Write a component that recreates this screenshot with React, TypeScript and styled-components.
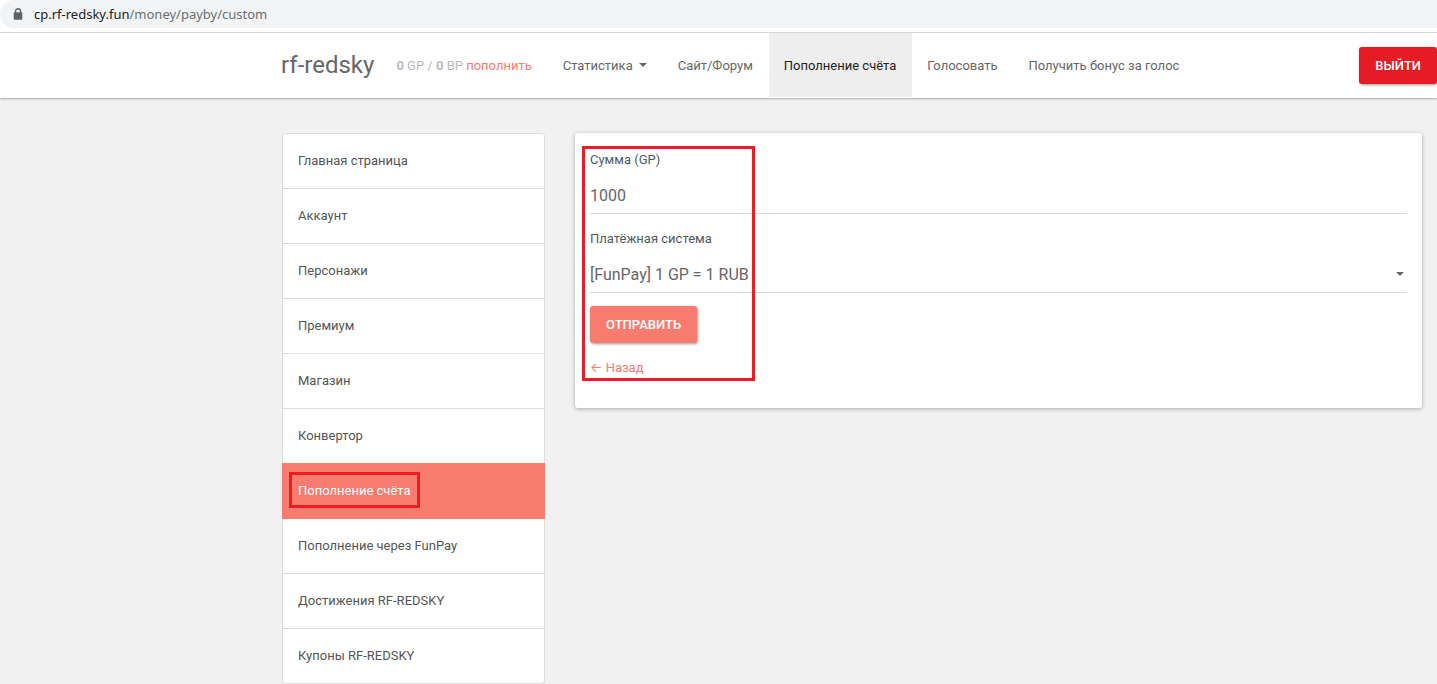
import React from "react";
import styled, { createGlobalStyle } from "styled-components";

const GlobalStyle = createGlobalStyle`
  *, *::before, *::after { box-sizing: border-box; }
  body {
    margin: 0;
    background: #f1f1f1;
    color: #666;
    font-family: Roboto, "Liberation Sans", sans-serif;
    font-size: 13px;
    line-height: 23px;
  }
  a { text-decoration: none; }
`;

const accent = "#f87b70";
const mark = "#ea1c24";

const BrowserBar = styled.div`
  background: #fff;
  padding-bottom: 4px;
  border-bottom: 1px solid #dcdcdc;
`;

const AddressPill = styled.div`
  display: flex;
  align-items: center;
  gap: 11px;
  height: 28px;
  padding-left: 13px;
  background: #f1f3f4;
  border-radius: 14px 0 0 14px;
  font-family: "Noto Sans", "Open Sans", sans-serif;
  font-size: 13px;
  color: #6b6f73;

  svg { display: block; }
  b { font-weight: 400; color: #202124; }
`;

const Navbar = styled.header`
  display: flex;
  align-items: center;
  height: 65px;
  padding-left: 281px;
  background: #fff;
  box-shadow: 0 1px 2px rgba(0, 0, 0, 0.3);
`;

const Brand = styled.a`
  font-size: 24px;
  color: #666;
`;

const Balance = styled.p`
  margin: 0 16px 0 22px;
  color: #bbb;
  white-space: nowrap;

  a { color: ${accent}; }
`;

const Nav = styled.nav`
  display: flex;
  align-self: stretch;
  padding-bottom: 1px;
`;

const NavLink = styled.a<{ $active?: boolean }>`
  display: flex;
  align-items: center;
  gap: 6px;
  padding: 0 16px 0 15px;
  white-space: nowrap;
  color: ${(p) => (p.$active ? "#212121" : "#666")};
  background: ${(p) => (p.$active ? "#eee" : "transparent")};
`;

const Button = styled.button<{ $color: string }>`
  height: 37px;
  padding: 0 16px;
  border: 0;
  border-radius: 3px;
  background: ${(p) => p.$color};
  color: #fff;
  font: 500 13px/23px Roboto, "Liberation Sans", sans-serif;
  text-transform: uppercase;
  box-shadow: 1px 1px 3px rgba(0, 0, 0, 0.4);
`;

const NavEnd = styled.div`
  margin-left: auto;
`;

const Page = styled.div`
  display: grid;
  grid-template-columns: 263px minmax(0, 1fr);
  gap: 30px;
  align-items: start;
  padding: 35px 15px 0 282px;
`;

const MenuList = styled.ul`
  margin: 0;
  padding: 0;
  list-style: none;
  background: #fff;
  border: 1px solid #ddd;
  border-radius: 3px;
`;

const MenuItem = styled.li`
  & + & { border-top: 1px solid #ddd; }
`;

const MenuLink = styled.a<{ $active?: boolean }>`
  display: flex;
  align-items: center;
  height: 54px;
  padding: 0 15px 2px;
  color: #555;
  ${(p) =>
    p.$active &&
    `
    position: relative;
    height: 56px;
    margin: -1px;
    padding: 0 16px 2px;
    background: ${accent};
    color: #fff;
  `}
`;

const Marked = styled.span`
  position: relative;
  display: block;

  &::after {
    content: "";
    position: absolute;
    inset: -7px -10px -6px -9px;
    border: 3px solid ${mark};
    pointer-events: none;
  }
`;

const Card = styled.main`
  position: relative;
  min-height: 275px;
  padding: 15px;
  background: #fff;
  border-radius: 3px;
  box-shadow: 0 1px 4px rgba(0, 0, 0, 0.3);
`;

const FormMark = styled.div`
  position: absolute;
  top: 13px;
  left: 7px;
  width: 173px;
  height: 235px;
  border: 3px solid ${mark};
  pointer-events: none;
`;

const Field = styled.div`
  position: relative;
  display: flex;
  flex-direction: column;
  gap: 6px;
  margin-bottom: 13px;
`;

const Label = styled.label`
  color: #4e5a66;
`;

const controlStyle = `
  width: 100%;
  height: 37px;
  margin: 0;
  padding: 0;
  border: 0;
  border-bottom: 1px solid #d9d9d9;
  border-radius: 0;
  outline: 0;
  background: transparent;
  color: #666;
  font: 400 16px/23px Roboto, "Liberation Sans", sans-serif;
  appearance: none;
`;

const TextInput = styled.input`${controlStyle}`;
const Select = styled.select`${controlStyle}`;

const SelectArrow = styled.span`
  position: absolute;
  right: 3px;
  bottom: 17px;
  display: flex;
  pointer-events: none;
`;

const BackLink = styled.a`
  display: inline-block;
  margin-top: 13px;
  color: ${accent};
`;

const BackArrow = styled.span`
  font-family: Inter, sans-serif;
  line-height: 1;
`;

const Caret = () => (
  <svg width="8" height="4" viewBox="0 0 8 4" aria-hidden="true">
    <path d="M0 0h8L4 4z" fill="#666" />
  </svg>
);

const menu = [
  "Главная страница",
  "Аккаунт",
  "Персонажи",
  "Премиум",
  "Магазин",
  "Конвертор",
  "Пополнение счёта",
  "Пополнение через FunPay",
  "Достижения RF-REDSKY",
  "Купоны RF-REDSKY",
];

export default function App() {
  return (
    <>
      <GlobalStyle />
      <BrowserBar>
        <AddressPill>
          <svg width="10" height="12" viewBox="0 0 10 12" aria-hidden="true">
            <path d="M2.5 5V3.2a2.5 2.5 0 0 1 5 0V5" fill="none" stroke="#5f6368" strokeWidth="1.4" />
            <rect x="0.7" y="4.3" width="8.6" height="7.4" rx="1" fill="#5f6368" />
          </svg>
          <span><b>cp.rf-redsky.fun</b>/money/payby/custom</span>
        </AddressPill>
      </BrowserBar>

      <Navbar>
        <Brand href="#">rf-redsky</Brand>
        <Balance>
          <b>0</b> GP / <b>0</b> BP <a href="#">пополнить</a>
        </Balance>
        <Nav>
          <NavLink href="#">Статистика <Caret /></NavLink>
          <NavLink href="#">Сайт/Форум</NavLink>
          <NavLink href="#" $active>Пополнение счёта</NavLink>
          <NavLink href="#">Голосовать</NavLink>
          <NavLink href="#">Получить бонус за голос</NavLink>
        </Nav>
        <NavEnd>
          <Button type="button" $color="#e51c23">Выйти</Button>
        </NavEnd>
      </Navbar>

      <Page>
        <MenuList>
          {menu.map((name) => {
            const active = name === "Пополнение счёта";
            return (
              <MenuItem key={name}>
                <MenuLink href="#" $active={active}>
                  {active ? <Marked>{name}</Marked> : name}
                </MenuLink>
              </MenuItem>
            );
          })}
        </MenuList>

        <Card>
          <form onSubmit={(e) => e.preventDefault()}>
            <Field>
              <Label htmlFor="sum">Сумма (GP)</Label>
              <TextInput id="sum" type="text" defaultValue="1000" />
            </Field>
            <Field>
              <Label htmlFor="system">Платёжная система</Label>
              <Select id="system">
                <option>[FunPay] 1 GP = 1 RUB</option>
              </Select>
              <SelectArrow><Caret /></SelectArrow>
            </Field>
            <Button type="submit" $color={accent}>Отправить</Button>
          </form>
          <BackLink href="#"><BackArrow>←</BackArrow> Назад</BackLink>
          <FormMark />
        </Card>
      </Page>
    </>
  );
}
